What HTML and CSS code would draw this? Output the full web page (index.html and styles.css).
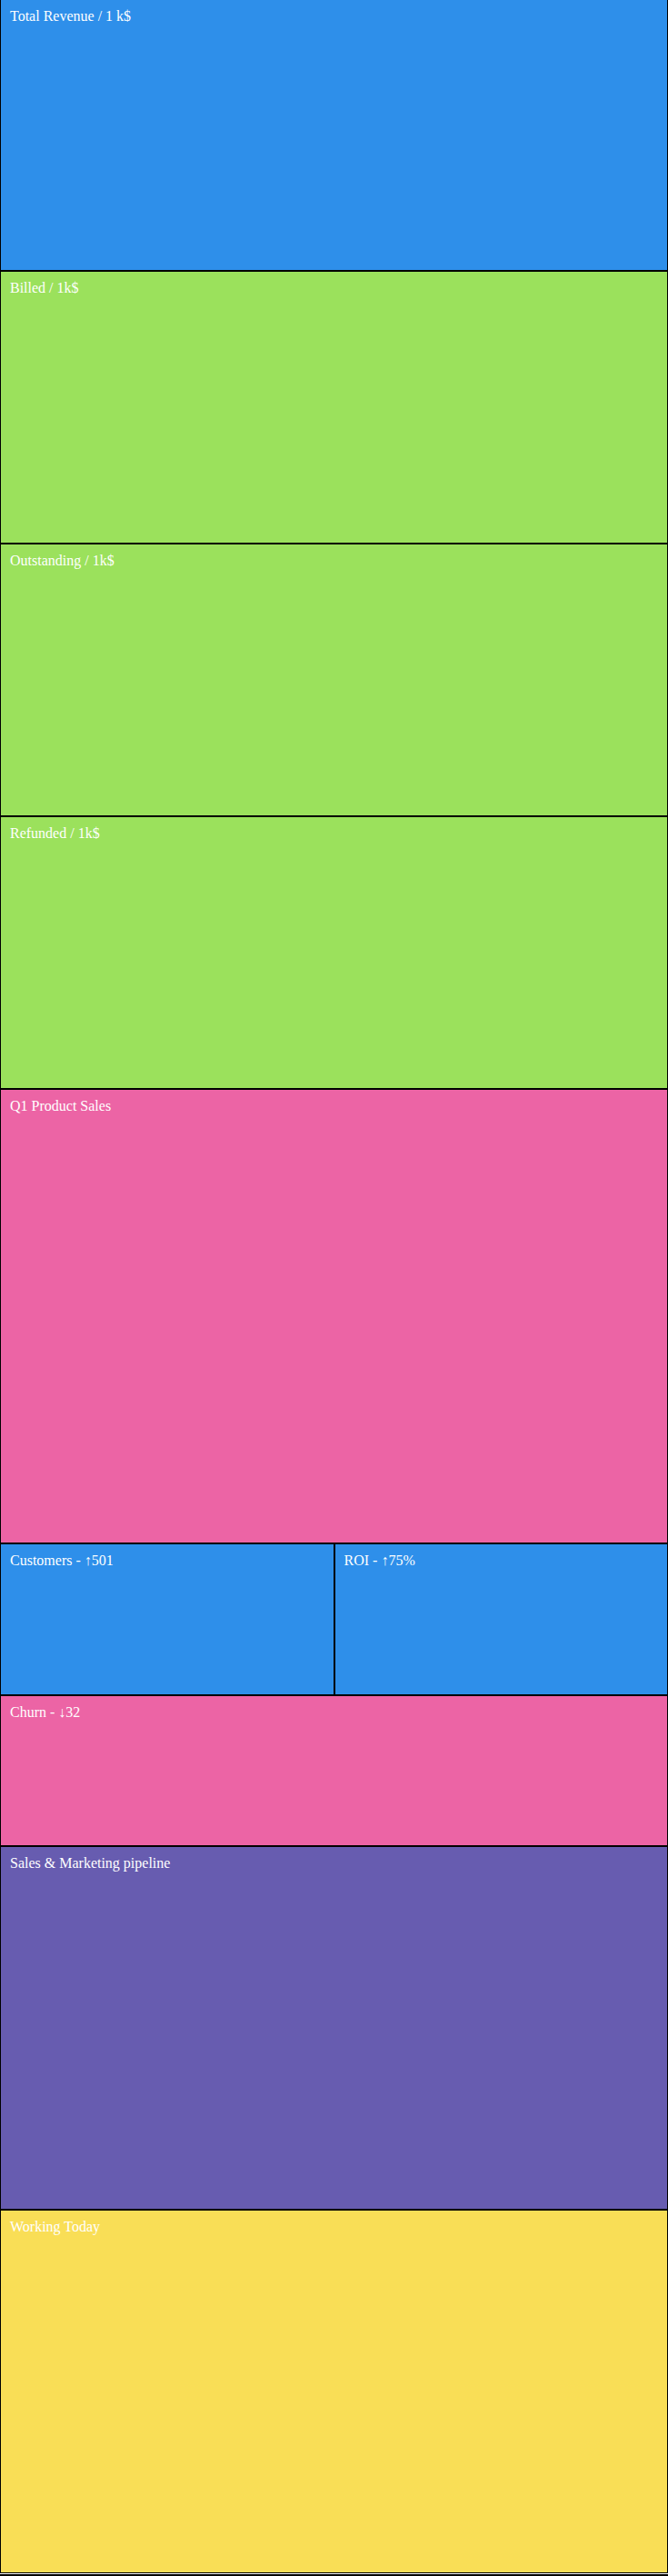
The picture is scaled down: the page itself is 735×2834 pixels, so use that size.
FILE: index.html
```html
<!DOCTYPE html>
<html lang="en">
<head>
<meta charset="utf-8">
<title>Dashboard</title>
<link rel="stylesheet" href="styles.css">
</head>
<body>
<main class="dash">
  <section class="tile tile--blue tile--kpi tile--first"><h2 class="tile__title">Total Revenue / 1 k$</h2></section>
  <section class="tile tile--green tile--kpi"><h2 class="tile__title">Billed / 1k$</h2></section>
  <section class="tile tile--green tile--kpi"><h2 class="tile__title">Outstanding / 1k$</h2></section>
  <section class="tile tile--green tile--kpi"><h2 class="tile__title">Refunded / 1k$</h2></section>
  <section class="tile tile--pink tile--wide"><h2 class="tile__title">Q1 Product Sales</h2></section>
  <div class="row">
    <section class="tile tile--blue tile--small"><h2 class="tile__title">Customers - ↑501</h2></section>
    <section class="tile tile--blue tile--small"><h2 class="tile__title">ROI - ↑75%</h2></section>
  </div>
  <section class="tile tile--pink tile--churn"><h2 class="tile__title">Churn - ↓32</h2></section>
  <section class="tile tile--purple tile--tall"><h2 class="tile__title">Sales &amp; Marketing pipeline</h2></section>
  <section class="tile tile--yellow tile--tall"><h2 class="tile__title">Working Today</h2></section>
  <div class="dash__end"></div>
</main>
</body>
</html>
```
FILE: styles.css
```css
html, body {
  margin: 0;
  padding: 0;
  background: #ffffff;
}

.dash {
  display: flex;
  flex-direction: column;
  width: 735px;
}

.tile {
  box-sizing: border-box;
  border: 1px solid #000;
  padding: 9px 10px;
  flex: none;
}

.tile__title {
  margin: 0;
  font-family: "Liberation Serif", "Times New Roman", serif;
  font-weight: normal;
  font-size: 16px;
  color: #ffffff;
}

.tile--first {
  border-top: 0;
  height: 298px !important;
}

.tile--kpi { height: 300px; }
.tile--wide { height: 500px; }
.tile--small { height: 167px; }
.tile--churn { height: 166px; }
.tile--tall { height: 400px; }

.tile--blue { background: #2e8fea; }
.tile--green { background: #9be15c; }
.tile--pink { background: #ec64a5; }
.tile--purple { background: #675cb0; }
.tile--yellow { background: #f9de56; }

.row {
  display: grid;
  grid-template-columns: 1fr 1fr;
}

.dash__end {
  margin-top: 1px;
  border-top: 2px solid #000;
}
```
